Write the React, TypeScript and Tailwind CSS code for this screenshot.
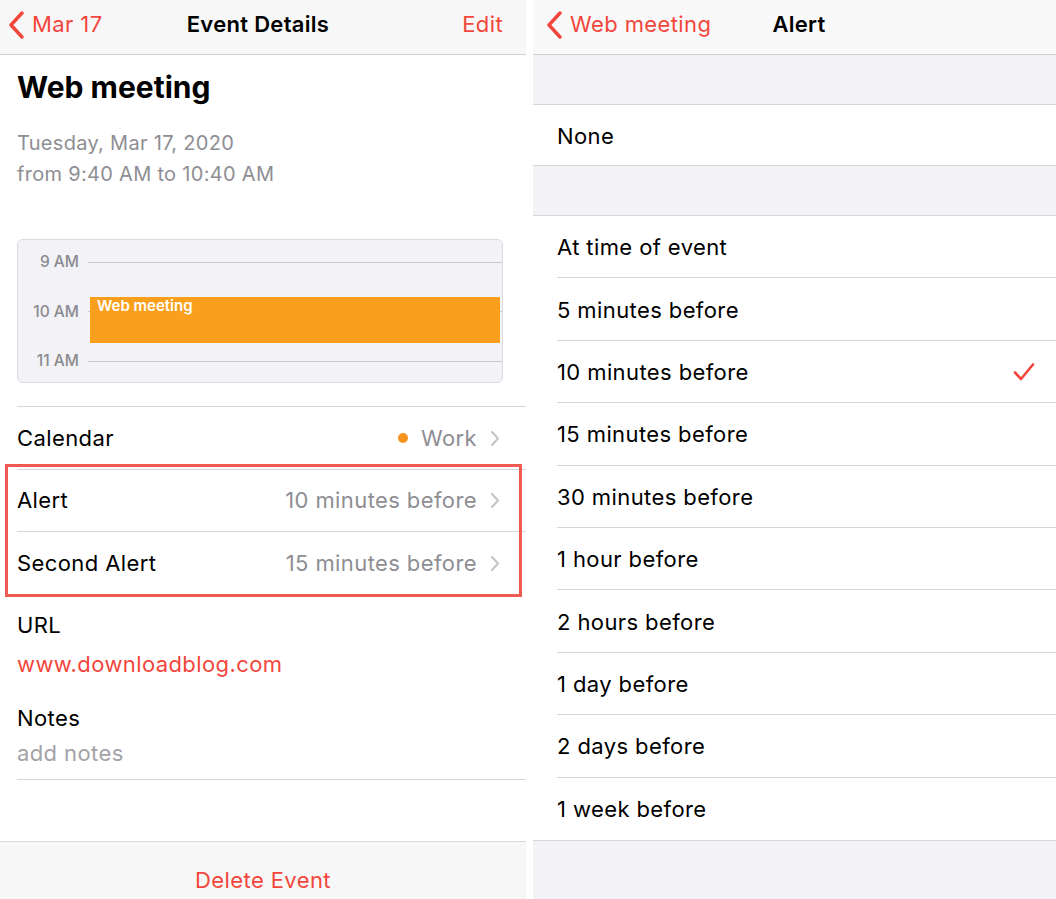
import React from "react";

const RED = "text-[#f2463c]";

function BackChevron() {
  return (
    <svg width="18" height="28" viewBox="0 0 18 28" className="shrink-0">
      <polyline points="15,2 4,14 15,26" fill="none" stroke="#f2463c" strokeWidth="3.4" strokeLinecap="round" strokeLinejoin="round" />
    </svg>
  );
}

function Disclosure() {
  return (
    <svg width="10" height="17" viewBox="0 0 10 17" className="shrink-0">
      <polyline points="2,2 8,8.5 2,15" fill="none" stroke="#c4c4c8" strokeWidth="2" strokeLinecap="round" strokeLinejoin="round" />
    </svg>
  );
}

function Check() {
  return (
    <svg width="22" height="20" viewBox="0 0 22 20" className="shrink-0">
      <polyline points="2,10.5 8,17 20,2.5" fill="none" stroke="#f2463c" strokeWidth="2.6" strokeLinecap="round" strokeLinejoin="round" />
    </svg>
  );
}

const BODY = "text-[22px] tracking-[0.4px]";

function LeftPanel() {
  return (
    <div className="w-[526px] h-full flex flex-col bg-white">
      {/* nav */}
      <div className="h-[55px] shrink-0 bg-[#f7f7f7] border-b border-[#cfcfd2] relative flex items-center pb-[5px]">
        <div className={`flex items-center pl-[7px] gap-[7px] ${RED} ${BODY}`}>
          <BackChevron />
          <span>Mar 17</span>
        </div>
        <div className="absolute left-0 right-[10px] top-0 h-[49px] flex items-center justify-center pointer-events-none">
          <span className="text-[22px] tracking-[0.3px] font-semibold text-black">Event Details</span>
        </div>
        <div className={`ml-auto pr-[23px] ${RED} ${BODY}`}>Edit</div>
      </div>

      <div className="pl-[17px]">
        <div className="pt-[17px] text-[30px] leading-[30px] font-bold text-black">Web meeting</div>
        <div className="mt-[26px] text-[20px] tracking-[0.3px] leading-[31px] text-[#8e8e93]">Tuesday, Mar 17, 2020</div>
        <div className="text-[20px] tracking-[0.3px] leading-[31px] text-[#8e8e93]">from 9:40 AM to 10:40 AM</div>

        {/* day preview */}
        <div className="mt-[49px] w-[486px] h-[144px] bg-[#f2f2f7] border border-[#dcdce0] rounded-[6px] relative flex flex-col pt-[12px] gap-[29.5px] overflow-hidden">
          {["9 AM", "10 AM", "11 AM"].map((h) => (
            <div key={h} className="h-[20px] flex items-center">
              <div className="w-[61px] text-right text-[15.5px] font-medium text-[#8a8a8f]">{h}</div>
              <div className="ml-[9px] flex-1 h-px bg-[#c9c9ce]" />
            </div>
          ))}
          <div className="absolute left-[72px] right-[2px] top-[57px] h-[46px] bg-[#fa9f1c] px-[7px]">
            <div className="text-[15px] font-semibold text-white leading-[16px] pt-[1px]">Web meeting</div>
          </div>
        </div>
      </div>

      {/* rows */}
      <div className="mt-[23px] pl-[17px] relative">
        <div className="h-[63px] border-t border-[#d6d6da] flex items-center pr-[26px]">
          <span className={`${BODY} text-black`}>Calendar</span>
          <div className="ml-auto flex items-center">
            <span className="w-[10px] h-[10px] rounded-full bg-[#f7941d]" />
            <span className={`ml-[13px] ${BODY} text-[#8e8e93]`}>Work</span>
            <span className="ml-[13px] flex"><Disclosure /></span>
          </div>
        </div>
        <div className="h-[62px] border-t border-[#d6d6da] flex items-center pr-[26px]">
          <span className={`${BODY} text-black`}>Alert</span>
          <div className="ml-auto flex items-center">
            <span className={`${BODY} text-[#8e8e93]`}>10 minutes before</span>
            <span className="ml-[13px] flex"><Disclosure /></span>
          </div>
        </div>
        <div className="h-[63px] border-t border-[#d6d6da] flex items-center pr-[26px]">
          <span className={`${BODY} text-black`}>Second Alert</span>
          <div className="ml-auto flex items-center">
            <span className={`${BODY} text-[#8e8e93]`}>15 minutes before</span>
            <span className="ml-[13px] flex"><Disclosure /></span>
          </div>
        </div>
        {/* annotation box */}
        <div className="absolute left-[5px] top-[58px] w-[517px] h-[133px] border-[3.5px] border-[#ef5b53] pointer-events-none" />
      </div>

      <div className="pl-[17px]">
        <div className={`pt-[16px] ${BODY} leading-[30px] text-black`}>URL</div>
        <div className={`mt-[9px] ${BODY} leading-[30px] ${RED}`}>www.downloadblog.com</div>
        <div className={`mt-[24px] ${BODY} leading-[30px] text-black`}>Notes</div>
        <div className={`mt-[5px] ${BODY} leading-[30px] text-[#a2a2a7]`}>add notes</div>
        <div className="mt-[11px] h-px bg-[#d6d6da]" />
      </div>

      <div className="mt-auto h-[58px] bg-[#f7f7f7] border-t border-[#d9d9dc] flex justify-center pt-[23px]">
        <span className={`${BODY} leading-[30px] ${RED}`}>Delete Event</span>
      </div>
    </div>
  );
}

const OPTIONS = [
  "At time of event",
  "5 minutes before",
  "10 minutes before",
  "15 minutes before",
  "30 minutes before",
  "1 hour before",
  "2 hours before",
  "1 day before",
  "2 days before",
  "1 week before",
];

function RightPanel() {
  return (
    <div className="flex-1 h-full flex flex-col bg-[#f2f2f7]">
      <div className="h-[55px] shrink-0 bg-[#f9f9fa] border-b border-[#cfcfd2] flex items-center pb-[5px]">
        <div className={`flex items-center pl-[12px] gap-[7px] ${RED} ${BODY}`}>
          <BackChevron />
          <span>Web meeting</span>
        </div>
        <span className="ml-[61px] text-[22px] tracking-[0.3px] font-semibold text-black">Alert</span>
      </div>
      <div className="h-[50px] shrink-0 border-b border-[#d6d6da]" />
      <div className="h-[61px] shrink-0 bg-white border-b border-[#d6d6da] flex items-center pl-[24px] pt-[2px]">
        <span className={`${BODY} text-black`}>None</span>
      </div>
      <div className="h-[50px] shrink-0 border-b border-[#d6d6da]" />
      <div className="bg-white border-b border-[#d6d6da] shrink-0">
        {OPTIONS.map((o, i) => (
          <div key={o} className="pl-[24px]">
            <div
              className={`h-[62.4px] flex items-center pr-[21px] pt-[2px] ${
                i < OPTIONS.length - 1 ? "border-b border-[#d6d6da]" : ""
              }`}
            >
              <span className={`${BODY} text-black`}>{o}</span>
              {o === "10 minutes before" && (
                <span className="ml-auto flex"><Check /></span>
              )}
            </div>
          </div>
        ))}
      </div>
    </div>
  );
}

export default function App() {
  return (
    <div
      className="w-[1056px] h-[899px] bg-white flex gap-[7px] overflow-hidden"
      style={{ fontFamily: "Inter, 'Liberation Sans', Arial, sans-serif" }}
    >
      <LeftPanel />
      <RightPanel />
    </div>
  );
}
